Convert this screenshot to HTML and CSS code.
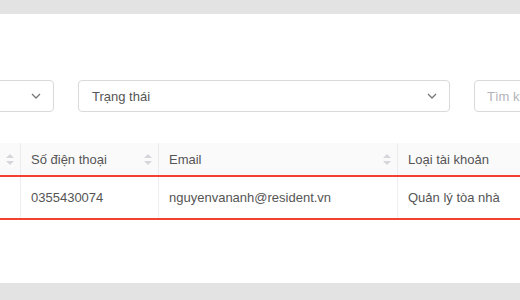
FILE: index.html
```html
<!DOCTYPE html>
<html lang="vi">
<head>
<meta charset="UTF-8">
<title>Danh sách tài khoản</title>
<link rel="stylesheet" href="styles.css">
</head>
<body>

<div class="panel">
  <div class="filters">
    <div class="select wide-left">
      <span class="select-text"></span>
      <svg class="chevron" width="10" height="6" viewBox="0 0 10 6"><polyline points="1,1 5,5 9,1" fill="none" stroke="#777" stroke-width="1.3"/></svg>
    </div>
    <div class="select status">
      <span class="select-text">Trạng thái</span>
      <svg class="chevron" width="10" height="6" viewBox="0 0 10 6"><polyline points="1,1 5,5 9,1" fill="none" stroke="#777" stroke-width="1.3"/></svg>
    </div>
    <div class="search">
      <span class="placeholder">Tìm kiếm...</span>
    </div>
  </div>

  <div class="table">
    <div class="row head">
      <div class="cell c1"><span></span><i class="sort"></i></div>
      <div class="cell c2"><span>Số điện thoại</span><i class="sort"></i></div>
      <div class="cell c3"><span>Email</span><i class="sort"></i></div>
      <div class="cell c4"><span>Loại tài khoản</span></div>
    </div>
    <div class="row body selected">
      <div class="cell c1"></div>
      <div class="cell c2">0355430074</div>
      <div class="cell c3">nguyenvananh@resident.vn</div>
      <div class="cell c4">Quản lý tòa nhà</div>
    </div>
  </div>
</div>

</body>
</html>
```

FILE: styles.css
```css
html, body {
  margin: 0;
  padding: 0;
  height: 100%;
  overflow: hidden;
}

body {
  font-family: "Liberation Sans", Arial, sans-serif;
  font-size: 13px;
  color: #555;
  background-color: #e3e3e3;
  padding-top: 14px;
}

.panel {
  background-color: #fff;
  height: 269px;
  padding-top: 66px;
  box-sizing: border-box;
}

.filters {
  display: flex;
  gap: 24px;
  margin-left: -147px;
  height: 32px;
}

.select,
.search {
  box-sizing: border-box;
  height: 32px;
  border: 1px solid #d9d9db;
  border-radius: 4px;
  display: flex;
  align-items: center;
  padding: 0 12px 0 13px;
  flex-shrink: 0;
}

.wide-left {
  width: 201px;
}

.status {
  width: 372px;
}

.search {
  width: 200px;
  padding-left: 12px;
}

.select-text {
  flex: 1;
  color: #555;
}

.placeholder {
  color: #b3b3b8;
}

.chevron {
  display: block;
}

.table {
  margin-top: 31px;
  margin-left: -180px;
  width: 900px;
}

.row {
  display: grid;
  grid-template-columns: 200px 138px 239px 323px;
}

.head {
  background-color: #fafafb;
  height: 32px;
}

.head .cell {
  border-left: 1px solid #ececf0;
}

.cell {
  box-sizing: border-box;
  padding: 0 6px 0 10px;
  display: flex;
  align-items: center;
}

.cell.c1 {
  border-left: none;
}

.cell span {
  flex: 1;
}

.sort {
  width: 8px;
  height: 11px;
  position: relative;
}

.sort::before,
.sort::after {
  content: "";
  position: absolute;
  left: 0;
  border-left: 4px solid transparent;
  border-right: 4px solid transparent;
}

.sort::before {
  top: 0;
  border-bottom: 4px solid #d6d6da;
}

.sort::after {
  bottom: 0;
  border-top: 4px solid #d6d6da;
}

.body {
  height: 45px;
}

.body .cell {
  border-left: 1px solid #eeeef2;
}

.body .cell.c1 {
  border-left: none;
}

.selected {
  border-top: 2px solid #f2412f;
  border-bottom: 2px solid #f2412f;
  box-sizing: border-box;
}
```
